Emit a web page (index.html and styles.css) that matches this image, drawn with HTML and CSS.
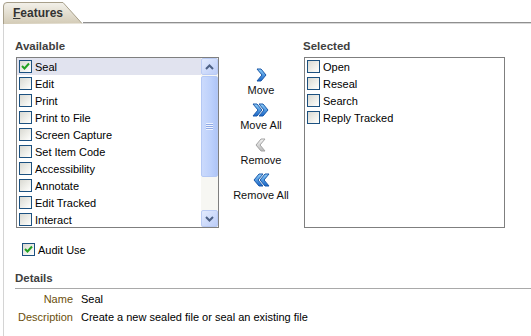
FILE: index.html
```html
<!DOCTYPE html>
<html lang="en">
  <head>
    <meta charset="UTF-8" />
    <title>Features</title>
    <link rel="stylesheet" href="styles.css">
  </head>
  <body>
    <div class="tabbar">
      <div class="tab">
        <svg class="tab-shape" width="80" height="22" viewBox="0 0 80 22">
          <defs>
            <linearGradient id="tabfill" x1="0" y1="0" x2="0" y2="1">
              <stop offset="0" stop-color="#f3f1ea" />
              <stop offset="1" stop-color="#d3cbb6" />
            </linearGradient>
          </defs>
          <path d="M0.5 22 V4 Q0.5 0.5 4 0.5 H60 L79 21.5" fill="url(#tabfill)" stroke="#a79f8a" />
        </svg>
        <span class="tab-label"><u>F</u>eatures</span>
      </div>
      <div class="tab-rest"></div>
    </div>

    <div class="panel">
      <div class="shuttle">
        <div class="column">
          <h2 class="heading">Available</h2>
          <div class="listbox available">
            <div class="items">
              <div class="item current"><span class="check on"></span>Seal</div>
              <div class="item"><span class="check"></span>Edit</div>
              <div class="item"><span class="check"></span>Print</div>
              <div class="item"><span class="check"></span>Print to File</div>
              <div class="item"><span class="check"></span>Screen Capture</div>
              <div class="item"><span class="check"></span>Set Item Code</div>
              <div class="item"><span class="check"></span>Accessibility</div>
              <div class="item"><span class="check"></span>Annotate</div>
              <div class="item"><span class="check"></span>Edit Tracked</div>
              <div class="item"><span class="check"></span>Interact</div>
            </div>
            <div class="scrollbar">
              <div class="sb-btn">
                <svg width="9" height="6" viewBox="0 0 9 6"><path d="M1 5 L4.5 1.5 L8 5" fill="none" stroke="#4d6185" stroke-width="2" /></svg>
              </div>
              <div class="sb-thumb"><span class="grip"></span></div>
              <div class="sb-track"></div>
              <div class="sb-btn">
                <svg width="9" height="6" viewBox="0 0 9 6"><path d="M1 1 L4.5 4.5 L8 1" fill="none" stroke="#4d6185" stroke-width="2" /></svg>
              </div>
            </div>
          </div>
        </div>

        <div class="actions">
          <div class="action">
            <svg width="12" height="14" viewBox="0 0 12 14">
              <defs>
                <linearGradient id="blue" x1="0" y1="0" x2="0" y2="1">
                  <stop offset="0" stop-color="#8fd0fb" />
                  <stop offset="1" stop-color="#1665c7" />
                </linearGradient>
                <linearGradient id="grey" x1="0" y1="0" x2="0" y2="1">
                  <stop offset="0" stop-color="#f4f4f4" />
                  <stop offset="1" stop-color="#b9b9b9" />
                </linearGradient>
              </defs>
              <path d="M2 1 H6 L11 7 L6 13 H2 L7 7 Z" fill="url(#blue)" stroke="#1c58a8" stroke-linejoin="round" />
            </svg>
            <span>Move</span>
          </div>
          <div class="action">
            <svg width="18" height="14" viewBox="0 0 18 14">
              <path d="M1 1 H5 L10 7 L5 13 H1 L6 7 Z" fill="url(#blue)" stroke="#1c58a8" stroke-linejoin="round" />
              <path d="M7 1 H11 L16 7 L11 13 H7 L12 7 Z" fill="url(#blue)" stroke="#1c58a8" stroke-linejoin="round" />
            </svg>
            <span>Move All</span>
          </div>
          <div class="action">
            <svg width="12" height="14" viewBox="0 0 12 14">
              <path d="M10 1 H6 L1 7 L6 13 H10 L5 7 Z" fill="url(#grey)" stroke="#a4a4a4" stroke-linejoin="round" />
            </svg>
            <span>Remove</span>
          </div>
          <div class="action">
            <svg width="18" height="14" viewBox="0 0 18 14">
              <path d="M17 1 H13 L8 7 L13 13 H17 L12 7 Z" fill="url(#blue)" stroke="#1c58a8" stroke-linejoin="round" />
              <path d="M11 1 H7 L2 7 L7 13 H11 L6 7 Z" fill="url(#blue)" stroke="#1c58a8" stroke-linejoin="round" />
            </svg>
            <span>Remove All</span>
          </div>
        </div>

        <div class="column">
          <h2 class="heading">Selected</h2>
          <div class="listbox selected">
            <div class="items">
              <div class="item"><span class="check"></span>Open</div>
              <div class="item"><span class="check"></span>Reseal</div>
              <div class="item"><span class="check"></span>Search</div>
              <div class="item"><span class="check"></span>Reply Tracked</div>
            </div>
          </div>
        </div>
      </div>

      <div class="audit"><span class="check on"></span>Audit Use</div>

      <h2 class="heading details-title">Details</h2>
      <div class="details">
        <span class="label">Name</span><span>Seal</span>
        <span class="label">Description</span><span>Create a new sealed file or seal an existing file</span>
      </div>
    </div>
  </body>
</html>
```

FILE: styles.css
```css
* {
  padding: 0;
  margin: 0;
  box-sizing: border-box;
}
body {
  background-color: #fff;
  font-family: "Liberation Sans", Arial, sans-serif;
  font-size: 11px;
  color: #000;
  width: 531px;
  height: 336px;
  overflow: hidden;
}

/* tab strip */
.tabbar {
  display: flex;
  align-items: flex-end;
  height: 24px;
  padding-top: 2px;
}
.tab {
  position: relative;
  width: 80px;
  height: 22px;
  margin-left: 3px;
}
.tab-shape {
  position: absolute;
  left: 0;
  top: 0;
}
.tab-label {
  position: relative;
  display: block;
  padding: 5px 0 0 10px;
  font-size: 12px;
  font-weight: 700;
  color: #333;
  line-height: 13px;
}
.tab-rest {
  flex: 1;
  height: 2px;
  border-top: 1px solid #8f8f8f;
  border-bottom: 1px solid #d8d8d8;
}

/* content panel */
.panel {
  margin-left: 3px;
  border-left: 1px solid #d4d4d4;
  padding: 15px 0 0 11px;
  height: 312px;
}
.heading {
  font-size: 11.5px;
  font-weight: 700;
  color: #3f3f3f;
  line-height: 14px;
}
.shuttle {
  display: flex;
}
.column .heading {
  margin-bottom: 4px;
}
.listbox {
  display: flex;
  height: 171px;
  border: 1px solid #7f7f7f;
  margin-left: 1px;
}
.available {
  width: 203px;
}
.selected {
  width: 201px;
}
.items {
  flex: 1;
}
.item {
  display: flex;
  align-items: center;
  height: 17px;
  padding-left: 2px;
}
.item.current {
  background-color: #e1e3ef;
}
.check {
  width: 13px;
  height: 13px;
  border: 1px solid #1c5180;
  background: linear-gradient(135deg, #d9d9d2, #f4f4f0 70%, #fff);
  margin-right: 3px;
  flex-shrink: 0;
}
.check.on {
  background-image: url("data:image/svg+xml,%3Csvg xmlns='http://www.w3.org/2000/svg' width='11' height='11'%3E%3Cpath d='M2 5 L4.5 7.5 L9 2.5' fill='none' stroke='%2321a121' stroke-width='2'/%3E%3C/svg%3E"), linear-gradient(135deg, #d9d9d2, #f4f4f0 70%, #fff);
}

/* scrollbar */
.scrollbar {
  width: 17px;
  display: flex;
  flex-direction: column;
  background-color: #f7f7f3;
}
.sb-btn {
  height: 17px;
  display: flex;
  align-items: center;
  justify-content: center;
  background: linear-gradient(135deg, #e3ebfd, #bccdf8);
  border: 1px solid #bacbf4;
  border-radius: 2px;
}
.sb-thumb {
  height: 101px;
  margin-top: 1px;
  display: flex;
  align-items: center;
  justify-content: center;
  background: linear-gradient(90deg, #cbdafc, #bcd0fb 60%, #afc5f7);
  border: 1px solid #b4c8f4;
  border-radius: 2px;
}
.grip {
  width: 7px;
  height: 7px;
  background: repeating-linear-gradient(180deg, #eef3fe 0 1px, #8fa9e6 1px 2px);
}
.sb-track {
  flex: 1;
}

/* move buttons */
.actions {
  width: 84px;
  padding-top: 29px;
  display: flex;
  flex-direction: column;
  align-items: center;
}
.action {
  height: 35px;
  display: flex;
  flex-direction: column;
  align-items: center;
  line-height: 13px;
  color: #111;
}
.action svg {
  display: block;
  margin-bottom: 2px;
}

/* audit + details */
.audit {
  display: flex;
  align-items: center;
  margin: 14px 0 0 7px;
  height: 15px;
}
.details-title {
  margin-top: 14px;
  padding-bottom: 3px;
  border-bottom: 1px solid #a9a9a9;
}
.details {
  display: grid;
  grid-template-columns: 58px auto;
  column-gap: 8px;
  row-gap: 5px;
  padding-top: 4px;
  line-height: 13px;
}
.details .label {
  text-align: right;
  color: #6b4f0b;
}
```
